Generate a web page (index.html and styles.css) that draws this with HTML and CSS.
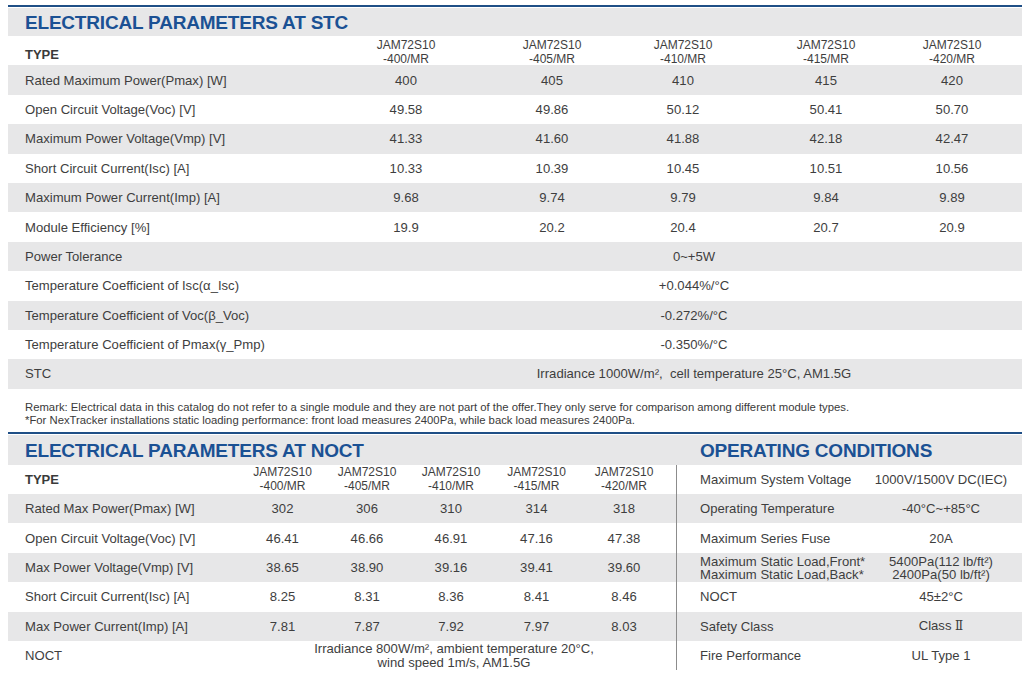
FILE: index.html
```html
<!DOCTYPE html>
<html>
<head>
<meta charset="utf-8">
<title>Electrical Parameters</title>
<link rel="stylesheet" href="styles.css">
</head>
<body>
<div class="sheet">
  <section class="stc">
    <div class="band band-single"><h2 class="title">ELECTRICAL PARAMETERS AT STC</h2></div>
    <div class="tbl stc-tbl">
      <div class="row head">
        <div class="lbl type">TYPE</div>
        <div class="c">JAM72S10<br>-400/MR</div>
        <div class="c">JAM72S10<br>-405/MR</div>
        <div class="c">JAM72S10<br>-410/MR</div>
        <div class="c">JAM72S10<br>-415/MR</div>
        <div class="c">JAM72S10<br>-420/MR</div>
      </div>
      <div class="row">
        <div class="lbl">Rated Maximum Power(Pmax) [W]</div>
        <div class="c">400</div><div class="c">405</div><div class="c">410</div><div class="c">415</div><div class="c">420</div>
      </div>
      <div class="row">
        <div class="lbl">Open Circuit Voltage(Voc) [V]</div>
        <div class="c">49.58</div><div class="c">49.86</div><div class="c">50.12</div><div class="c">50.41</div><div class="c">50.70</div>
      </div>
      <div class="row">
        <div class="lbl">Maximum Power Voltage(Vmp) [V]</div>
        <div class="c">41.33</div><div class="c">41.60</div><div class="c">41.88</div><div class="c">42.18</div><div class="c">42.47</div>
      </div>
      <div class="row">
        <div class="lbl">Short Circuit Current(Isc) [A]</div>
        <div class="c">10.33</div><div class="c">10.39</div><div class="c">10.45</div><div class="c">10.51</div><div class="c">10.56</div>
      </div>
      <div class="row">
        <div class="lbl">Maximum Power Current(Imp) [A]</div>
        <div class="c">9.68</div><div class="c">9.74</div><div class="c">9.79</div><div class="c">9.84</div><div class="c">9.89</div>
      </div>
      <div class="row">
        <div class="lbl">Module Efficiency [%]</div>
        <div class="c">19.9</div><div class="c">20.2</div><div class="c">20.4</div><div class="c">20.7</div><div class="c">20.9</div>
      </div>
      <div class="row">
        <div class="lbl">Power Tolerance</div>
        <div class="c span">0~+5W</div>
      </div>
      <div class="row">
        <div class="lbl">Temperature Coefficient of Isc(α_Isc)</div>
        <div class="c span">+0.044%/°C</div>
      </div>
      <div class="row">
        <div class="lbl">Temperature Coefficient of Voc(β_Voc)</div>
        <div class="c span">-0.272%/°C</div>
      </div>
      <div class="row">
        <div class="lbl">Temperature Coefficient of Pmax(γ_Pmp)</div>
        <div class="c span">-0.350%/°C</div>
      </div>
      <div class="row">
        <div class="lbl">STC</div>
        <div class="c span">Irradiance 1000W/m²,&nbsp; cell temperature 25°C, AM1.5G</div>
      </div>
    </div>
  </section>

  <p class="remark">Remark: Electrical data in this catalog do not refer to a single module and they are not part of the offer.They only serve for comparison among different module types.<br>*For NexTracker installations static loading performance: front load measures 2400Pa, while back load measures 2400Pa.</p>

  <section class="bottom">
    <div class="band band-dual">
      <h2 class="title t-noct">ELECTRICAL PARAMETERS AT NOCT</h2>
      <h2 class="title t-op">OPERATING CONDITIONS</h2>
    </div>
    <div class="pair">
      <div class="tbl noct-tbl">
        <div class="row head">
          <div class="lbl type">TYPE</div>
          <div class="c">JAM72S10<br>-400/MR</div>
          <div class="c">JAM72S10<br>-405/MR</div>
          <div class="c">JAM72S10<br>-410/MR</div>
          <div class="c">JAM72S10<br>-415/MR</div>
          <div class="c">JAM72S10<br>-420/MR</div>
        </div>
        <div class="row">
          <div class="lbl">Rated Max Power(Pmax) [W]</div>
          <div class="c">302</div><div class="c">306</div><div class="c">310</div><div class="c">314</div><div class="c">318</div>
        </div>
        <div class="row">
          <div class="lbl">Open Circuit Voltage(Voc) [V]</div>
          <div class="c">46.41</div><div class="c">46.66</div><div class="c">46.91</div><div class="c">47.16</div><div class="c">47.38</div>
        </div>
        <div class="row">
          <div class="lbl">Max Power Voltage(Vmp) [V]</div>
          <div class="c">38.65</div><div class="c">38.90</div><div class="c">39.16</div><div class="c">39.41</div><div class="c">39.60</div>
        </div>
        <div class="row">
          <div class="lbl">Short Circuit Current(Isc) [A]</div>
          <div class="c">8.25</div><div class="c">8.31</div><div class="c">8.36</div><div class="c">8.41</div><div class="c">8.46</div>
        </div>
        <div class="row">
          <div class="lbl">Max Power Current(Imp) [A]</div>
          <div class="c">7.81</div><div class="c">7.87</div><div class="c">7.92</div><div class="c">7.97</div><div class="c">8.03</div>
        </div>
        <div class="row">
          <div class="lbl">NOCT</div>
          <div class="c span">Irradiance 800W/m², ambient temperature 20°C,<br>wind speed 1m/s, AM1.5G</div>
        </div>
      </div>
      <div class="tbl op-tbl">
        <div class="row">
          <div class="lbl">Maximum System Voltage</div>
          <div class="c">1000V/1500V DC(IEC)</div>
        </div>
        <div class="row">
          <div class="lbl">Operating Temperature</div>
          <div class="c">-40°C~+85°C</div>
        </div>
        <div class="row">
          <div class="lbl">Maximum Series Fuse</div>
          <div class="c">20A</div>
        </div>
        <div class="row">
          <div class="lbl two">Maximum Static Load,Front*<br>Maximum Static Load,Back*</div>
          <div class="c two">5400Pa(112 lb/ft²)<br>2400Pa(50 lb/ft²)</div>
        </div>
        <div class="row">
          <div class="lbl">NOCT</div>
          <div class="c">45±2°C</div>
        </div>
        <div class="row">
          <div class="lbl">Safety Class</div>
          <div class="c">Class <span class="roman">Ⅱ</span></div>
        </div>
        <div class="row">
          <div class="lbl">Fire Performance</div>
          <div class="c">UL Type 1</div>
        </div>
      </div>
    </div>
  </section>
</div>
</body>
</html>
```

FILE: styles.css
```css
html, body {
  margin: 0;
  padding: 0;
  background: #ffffff;
}

body {
  font-family: "Liberation Sans", Arial, sans-serif;
  color: #3e3e3e;
}

.sheet {
  width: 1014px;
  padding: 5px 6px 0 8px;
}

.stc {
  border-top: 2px solid #1f4f86;
}

.bottom {
  border-top: 2px solid #1f4f86;
}

.band {
  background: #e7e7e8;
  margin-top: 1px;
  display: flex;
}

.band-single {
  height: 28px;
  padding-left: 17px;
  align-items: flex-end;
}

.band-single .title {
  padding-bottom: 2px;
}

.band-dual {
  height: 30px;
  align-items: center;
}

.band-dual .title {
  padding-top: 2px;
}

.title {
  margin: 0;
  font-size: 19px;
  line-height: 22px;
  font-weight: bold;
  color: #1b5194;
  letter-spacing: -0.2px;
}

.t-noct {
  width: 651px;
  padding-left: 17px;
}

.t-op {
  padding-left: 24px;
}

.row {
  display: grid;
  height: 29.4px;
  align-items: center;
  font-size: 13.1px;
  line-height: 15px;
}

.tbl .row:nth-child(even) {
  background: #e7e7e8;
}

.lbl {
  padding-left: 17px;
  white-space: nowrap;
}

.c {
  text-align: center;
  white-space: nowrap;
}

.head .c {
  font-size: 12px;
  line-height: 14px;
}

.type {
  font-weight: bold;
  font-size: 13px;
  color: #3a3a3a;
}

.stc-tbl .head {
  padding-top: 2px;
  box-sizing: border-box;
  height: 29.4px;
}

.stc-tbl .head .type {
  padding-top: 5px;
}

.stc-tbl .row {
  grid-template-columns: 322px 152px 140px 122px 164px 88px 1fr;
}

.stc-tbl .span {
  grid-column: 2 / -1;
  padding-left: 36px;
}

.remark {
  margin: 12px 0 5px 17px;
  font-size: 11.3px;
  line-height: 13px;
  color: #3a3a3a;
  white-space: nowrap;
}

.pair {
  display: flex;
}

.noct-tbl {
  width: 668px;
}

.noct-tbl .row {
  grid-template-columns: 232px 85px 84px 84px 87px 88px 1fr;
}

.noct-tbl .span {
  grid-column: 2 / 7;
  line-height: 14px;
}

.op-tbl {
  flex: 1;
  border-left: 1px solid #8c8c8c;
}

.op-tbl .row {
  grid-template-columns: 183px 1fr;
}

.op-tbl .lbl {
  padding-left: 23px;
}

.two {
  line-height: 13px;
}

.roman {
  font-family: "DejaVu Serif", "Liberation Serif", serif;
  font-size: 12px;
  font-weight: normal;
}
```
